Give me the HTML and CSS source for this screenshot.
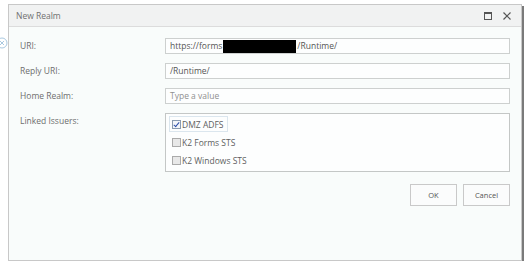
FILE: index.html
```html
<!DOCTYPE html>
<html lang="en">
<head>
    <meta charset="UTF-8">
    <title>New Realm</title>
    <link rel="stylesheet" href="styles.css">
</head>
<body>
    <!-- icon of the page behind, cut off at the left edge -->
    <svg class="edge-icon" width="12" height="12" viewBox="0 0 12 12">
        <circle cx="6" cy="6" r="5" fill="none" stroke="#a9c8e0" stroke-width="1"/>
        <path d="M4 4 L8 8 M8 4 L4 8" stroke="#a9c8e0" stroke-width="1"/>
    </svg>

    <div class="dialog">
        <div class="dialog-title">
            <span>New Realm</span>
            <div class="title-buttons">
                <svg width="8" height="8" viewBox="0 0 8 8">
                    <rect x="0.5" y="0.5" width="7" height="7" fill="none" stroke="#555"/>
                    <rect x="0.5" y="0.5" width="7" height="1.5" fill="#555"/>
                </svg>
                <svg width="8" height="8" viewBox="0 0 8 8">
                    <path d="M0.5 0.5 L7.5 7.5 M7.5 0.5 L0.5 7.5" stroke="#555" stroke-width="1.2"/>
                </svg>
            </div>
        </div>

        <div class="dialog-body">
            <div class="form">
                <label>URI:</label>
                <div class="field">https://forms<span class="redacted"></span>/Runtime/</div>

                <label>Reply URI:</label>
                <div class="field">/Runtime/</div>

                <label>Home Realm:</label>
                <div class="field placeholder">Type a value</div>

                <label>Linked Issuers:</label>
                <div class="list">
                    <div class="item selected"><span class="check on"></span>DMZ ADFS</div>
                    <div class="item"><span class="check"></span>K2 Forms STS</div>
                    <div class="item"><span class="check"></span>K2 Windows STS</div>
                </div>
            </div>

            <div class="actions">
                <button>OK</button>
                <button>Cancel</button>
            </div>
        </div>
    </div>
</body>
</html>
```

FILE: styles.css
```css
body {
    margin: 0;
    background: #ffffff;
    font-family: 'Open Sans', 'Noto Sans', sans-serif;
    font-size: 8.5px;
    color: #666;
}
.edge-icon {
    position: absolute;
    left: -4px;
    top: 37px;
}
.dialog {
    margin: 4px 0 0 8px;
    width: 512px;
    height: 255px;
    border: 1px solid #c8c8c8;
    background: #f9fcfb;
    box-shadow: 2px 2px 0 #7a7a7a;
    display: flex;
    flex-direction: column;
}
.dialog-title {
    height: 21px;
    background: #f1f2f2;
    border-bottom: 1px solid #dcdcdc;
    display: flex;
    align-items: center;
    justify-content: space-between;
    padding: 0 10px 0 7px;
    color: #707070;
}
.title-buttons {
    display: flex;
    gap: 11px;
    align-items: center;
}
.dialog-body {
    padding: 11px 11px 0 11px;
}
.form {
    display: grid;
    grid-template-columns: 145px 1fr;
    row-gap: 9px;
}
.form label {
    line-height: 16px;
    color: #6e6e6e;
}
.field {
    height: 14px;
    line-height: 14px;
    border: 1px solid #cdd0cf;
    background: #fdfefe;
    padding: 0 4px;
    color: #555;
    display: flex;
    align-items: center;
}
.field.placeholder {
    color: #909090;
}
.redacted {
    display: inline-block;
    width: 73px;
    height: 13px;
    background: #000;
    margin: 0 1px 0 1px;
}
.list {
    height: 54px;
    border: 1px solid #c4c7c6;
    background: #fdfefe;
    padding: 3px 0 0 4px;
}
.item {
    display: flex;
    align-items: center;
    height: 14px;
    margin-bottom: 4px;
    width: fit-content;
    padding: 0 4px 0 2px;
    color: #5e5e5e;
}
.item.selected {
    border: 1px solid #dbe6ee;
    margin: -1px 0 3px -1px;
}
.check {
    width: 7px;
    height: 7px;
    border: 1px solid #aaa;
    background: #e8e8e8;
    margin-right: 1px;
    position: relative;
}
.check.on {
    border-color: #8a9bb0;
    background: #f4f6fa;
}
.check.on::after {
    content: "";
    position: absolute;
    left: 2px;
    top: 0;
    width: 2px;
    height: 5px;
    border: solid #2b4ea8;
    border-width: 0 1.5px 1.5px 0;
    transform: rotate(40deg);
}
.actions {
    display: flex;
    justify-content: flex-end;
    gap: 6px;
    margin-top: 12px;
}
button {
    font-family: inherit;
    font-size: 7.5px;
    color: #555;
    background: #fbfcfc;
    border: 1px solid #c9c9c9;
    width: 47px;
    height: 22px;
    padding: 0;
}
```
